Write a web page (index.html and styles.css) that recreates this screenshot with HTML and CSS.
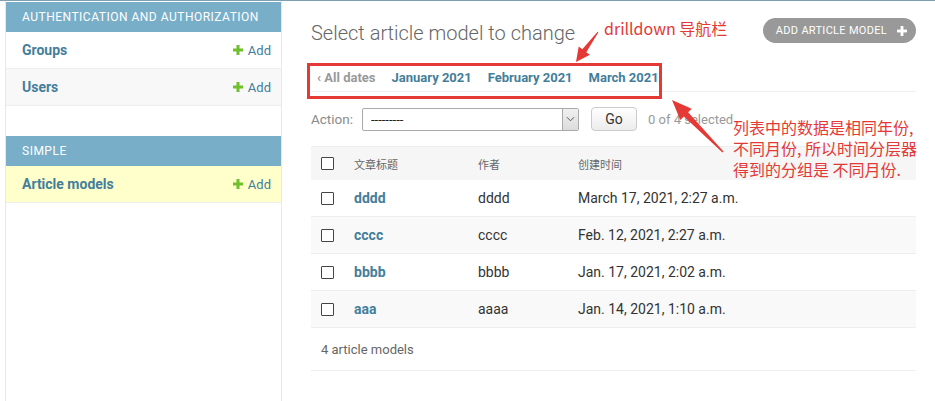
FILE: index.html
```html
<!DOCTYPE html>
<html lang="zh">
<head>
<meta charset="utf-8">
<title>Select article model to change</title>
<link rel="stylesheet" href="styles.css">
</head>
<body>
<div class="page">
  <nav class="sidebar">
    <section class="module">
      <div class="caption">Authentication and Authorization</div>
      <div class="row">
        <a class="model" href="#">Groups</a>
        <a class="addlink" href="#"><svg class="plus" viewBox="0 0 10 10"><rect x="3.5" y="0" width="3" height="10" fill="#70bf2b"/><rect x="0" y="3.5" width="10" height="3" fill="#70bf2b"/></svg>Add</a>
      </div>
      <div class="row alt">
        <a class="model" href="#">Users</a>
        <a class="addlink" href="#"><svg class="plus" viewBox="0 0 10 10"><rect x="3.5" y="0" width="3" height="10" fill="#70bf2b"/><rect x="0" y="3.5" width="10" height="3" fill="#70bf2b"/></svg>Add</a>
      </div>
    </section>
    <section class="module">
      <div class="caption">Simple</div>
      <div class="row current">
        <a class="model" href="#">Article models</a>
        <a class="addlink" href="#"><svg class="plus" viewBox="0 0 10 10"><rect x="3.5" y="0" width="3" height="10" fill="#70bf2b"/><rect x="0" y="3.5" width="10" height="3" fill="#70bf2b"/></svg>Add</a>
      </div>
    </section>
  </nav>

  <main class="content">
    <div class="header">
      <h1>Select article model to change</h1>
      <a class="object-tool" href="#">Add article model<svg class="tool-plus" viewBox="0 0 10 10"><rect x="3.6" y="0" width="2.8" height="10" fill="#fff"/><rect x="0" y="3.6" width="10" height="2.8" fill="#fff"/></svg></a>
    </div>

    <div class="date-hierarchy">
      <a class="back" href="#">‹ All dates</a>
      <a href="#">January 2021</a>
      <a href="#">February 2021</a>
      <a href="#">March 2021</a>
    </div>

    <div class="actions">
      <span class="action-label">Action:</span>
      <div class="select">
        <span class="select-value">---------</span>
        <span class="select-arrow"><svg viewBox="0 0 10 6" width="9" height="6"><path d="M1 1 L5 5 L9 1" fill="none" stroke="#555" stroke-width="1.1"/></svg></span>
      </div>
      <button class="go" type="button">Go</button>
      <span class="counter">0 of 4 selected</span>
    </div>

    <div class="results">
      <div class="r head">
        <span class="cb"><span class="box"></span></span>
        <span>文章标题</span>
        <span>作者</span>
        <span>创建时间</span>
      </div>
      <div class="r">
        <span class="cb"><span class="box"></span></span>
        <a class="title" href="#">dddd</a>
        <span>dddd</span>
        <span>March 17, 2021, 2:27 a.m.</span>
      </div>
      <div class="r alt">
        <span class="cb"><span class="box"></span></span>
        <a class="title" href="#">cccc</a>
        <span>cccc</span>
        <span>Feb. 12, 2021, 2:27 a.m.</span>
      </div>
      <div class="r">
        <span class="cb"><span class="box"></span></span>
        <a class="title" href="#">bbbb</a>
        <span>bbbb</span>
        <span>Jan. 17, 2021, 2:02 a.m.</span>
      </div>
      <div class="r alt">
        <span class="cb"><span class="box"></span></span>
        <a class="title" href="#">aaa</a>
        <span>aaaa</span>
        <span>Jan. 14, 2021, 1:10 a.m.</span>
      </div>
    </div>

    <p class="paginator">4 article models</p>
  </main>
</div>

<div class="mark-box"></div>
<svg class="arrows" viewBox="0 0 935 401" width="935" height="401">
  <polygon points="598.4,32.3 586.3,52.2 589.9,54.8 576,62 578.7,46.6 582.3,49.2 597.6,31.7" fill="#e53935"/>
  <polygon points="723.5,151.5 688.1,112.2 691.7,108.7 672,100 680.3,119.9 683.9,116.4 722.5,152.5" fill="#e53935"/>
</svg>
<div class="note note-top">drilldown 导航栏</div>
<div class="note note-side">
  <div class="note-line">列表中的数据是相同年份,</div>
  <div class="note-line">不同月份, 所以时间分层器</div>
  <div class="note-line">得到的分组是 不同月份.</div>
</div>
</body>
</html>
```

FILE: styles.css
```css
* { box-sizing: border-box; }
html, body { margin: 0; padding: 0; }
body {
  position: relative;
  width: 935px;
  height: 401px;
  overflow: hidden;
  background: #fff;
  color: #333;
  font-family: Roboto, "Noto Sans CJK SC", sans-serif;
  font-size: 14px;
}
a { text-decoration: none; }

.page {
  display: flex;
  align-items: stretch;
  height: 401px;
  border-top: 1px solid #7f9fb3;
}

/* sidebar */
.sidebar {
  flex: 0 0 277px;
  margin-left: 5px;
  padding-top: 1px;
  border-left: 1px solid #e8e8e8;
  border-right: 1px solid #e8e8e8;
}
.module { margin-bottom: 30px; }
.caption {
  height: 30px;
  padding: 8px 16px;
  background: #79aec8;
  color: #fff;
  font-size: 12px;
  line-height: 14px;
  letter-spacing: 0.5px;
  text-transform: uppercase;
}
.row {
  display: flex;
  align-items: center;
  justify-content: space-between;
  height: 37px;
  padding: 0 10px 0 16px;
  border-bottom: 1px solid #eee;
}
.row.alt { background: #f8f8f8; }
.row.current { background: #ffffcc; }
.model { color: #447e9b; font-weight: 700; font-size: 14px; }
.addlink {
  display: flex;
  align-items: center;
  gap: 5px;
  color: #447e9b;
  font-size: 13px;
}
.plus { width: 10px; height: 10px; display: block; }

/* content */
.content {
  flex: 1;
  min-width: 0;
  padding: 17px 19px 0 29px;
}
.header {
  display: flex;
  justify-content: space-between;
  align-items: flex-start;
}
.header h1 {
  margin: 3px 0 0;
  font-size: 20px;
  line-height: 24px;
  font-weight: 300;
  color: #666;
}
.object-tool {
  display: flex;
  align-items: center;
  gap: 10px;
  height: 25px;
  padding: 0 9px 0 13px;
  border-radius: 15px;
  background: #999;
  color: #fff;
  font-size: 11px;
  letter-spacing: 0.3px;
  text-transform: uppercase;
}
.tool-plus { width: 10px; height: 10px; display: block; }

.date-hierarchy {
  display: flex;
  gap: 16px;
  margin-top: 25px;
  padding: 0 0 5px 6px;
  border-bottom: 1px solid #eee;
  font-size: 13px;
  line-height: 16px;
  font-weight: 700;
}
.date-hierarchy a { color: #447e9b; }
.date-hierarchy a.back { color: #999; }

.actions {
  display: flex;
  align-items: center;
  height: 39px;
  padding-top: 15px;
  font-size: 13px;
}
.action-label { color: #8a8a8a; font-size: 13.5px; }
.select {
  display: flex;
  align-items: stretch;
  width: 217px;
  height: 23px;
  margin-left: 9px;
  border: 1px solid #aaa;
  border-radius: 2px;
  background: #fff;
}
.select-value {
  flex: 1;
  padding-left: 8px;
  line-height: 21px;
  font-size: 13px;
  color: #222;
}
.select-arrow {
  display: flex;
  align-items: center;
  justify-content: center;
  width: 16px;
  border-left: 1px solid #aaa;
  background: linear-gradient(#f0f0f0, #dcdcdc);
}
.go {
  width: 46px;
  height: 24px;
  margin-left: 12px;
  padding: 0;
  border: 1px solid #ccc;
  border-radius: 4px;
  background: linear-gradient(#fff, #ececec);
  color: #333;
  font-family: Roboto, sans-serif;
  font-size: 14px;
}
.counter {
  margin-left: 11px;
  color: #999;
  font-size: 13px;
}

.results { margin-top: 15px; }
.r {
  display: grid;
  grid-template-columns: 43px 124px 100px 1fr;
  align-items: center;
  height: 37px;
  border-bottom: 1px solid #eee;
  font-size: 14px;
}
.r.alt { background: #f9f9f9; }
.r.head {
  height: 34px;
  border-top: 1px solid #eee;
  border-bottom: none;
  background: #f6f6f6;
  font-size: 11px;
  color: #666;
}
.cb { padding-left: 10px; display: flex; }
.box {
  display: block;
  width: 13px;
  height: 13px;
  border: 1px solid #444;
  border-radius: 1px;
  background: #fff;
}
.title { color: #447e9b; font-weight: 700; }

.paginator {
  display: flex;
  align-items: center;
  height: 43px;
  margin: 0;
  padding-left: 10px;
  border-bottom: 1px solid #eee;
  color: #666;
  font-size: 13px;
}

/* annotations drawn over the screenshot */
.mark-box {
  position: absolute;
  left: 307px;
  top: 63px;
  width: 355px;
  height: 36px;
  border: 3px solid #e53935;
}
.arrows {
  position: absolute;
  left: 0;
  top: 0;
}
.note {
  position: absolute;
  color: #e53935;
  font-family: "Noto Sans CJK SC", sans-serif;
  font-size: 16px;
  line-height: 21px;
  white-space: nowrap;
}
.note-top { left: 604px; top: 18px; }
.note-side { left: 733px; top: 117px; }
.note-line { height: 21px; line-height: 21px; }
```
